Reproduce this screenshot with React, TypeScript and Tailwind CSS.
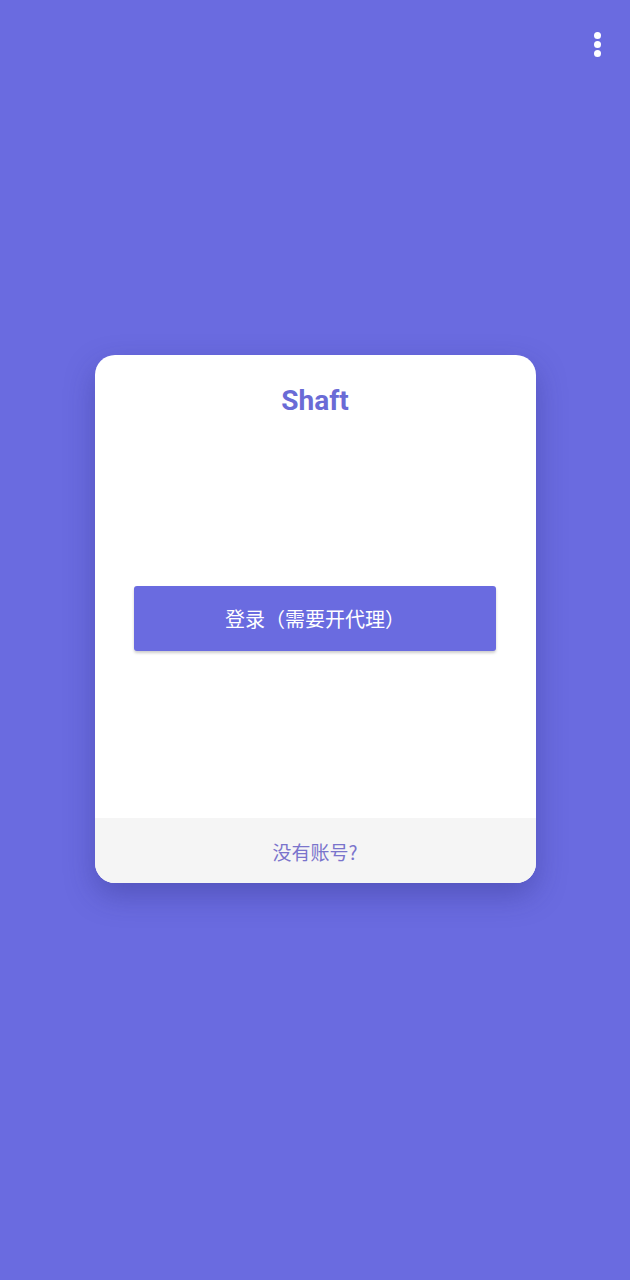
import React from 'react';

const App: React.FC = () => {
  return (
    <div
      className="relative w-[630px] h-[1280px] bg-[#6a6be0] flex flex-col items-center"
      style={{ fontFamily: 'Roboto, "Noto Sans CJK SC", sans-serif' }}
    >
      {/* overflow menu */}
      <button className="absolute top-[32px] right-[29px] flex flex-col items-center gap-[2px]">
        <span className="w-[7px] h-[7px] rounded-full bg-white" />
        <span className="w-[7px] h-[7px] rounded-full bg-white" />
        <span className="w-[7px] h-[7px] rounded-full bg-white" />
      </button>

      <div className="mt-[355px] w-[441px] rounded-[20px] bg-white overflow-hidden shadow-[0_12px_30px_rgba(40,40,120,0.35)]">
        <div className="h-[463px] flex flex-col items-center">
          <h1 className="mt-[29px] text-[28px] leading-[34px] font-bold text-[#6a6bd6]">Shaft</h1>
          <button className="mt-[168px] w-[362px] h-[65px] rounded-[3px] bg-[#6a6be0] text-white text-[20px] pt-[2px] shadow-[0_2px_3px_rgba(0,0,0,0.2)]">
            登录（需要开代理）
          </button>
        </div>
        <div className="h-[65px] bg-[#f5f5f5] flex items-center justify-center">
          <span
            className="text-[19px] text-[#7a74cc] pt-[3px]"
            style={{ fontFamily: '"Noto Sans CJK SC", sans-serif' }}
          >
            没有账号?
          </span>
        </div>
      </div>
    </div>
  );
};

export default App;
